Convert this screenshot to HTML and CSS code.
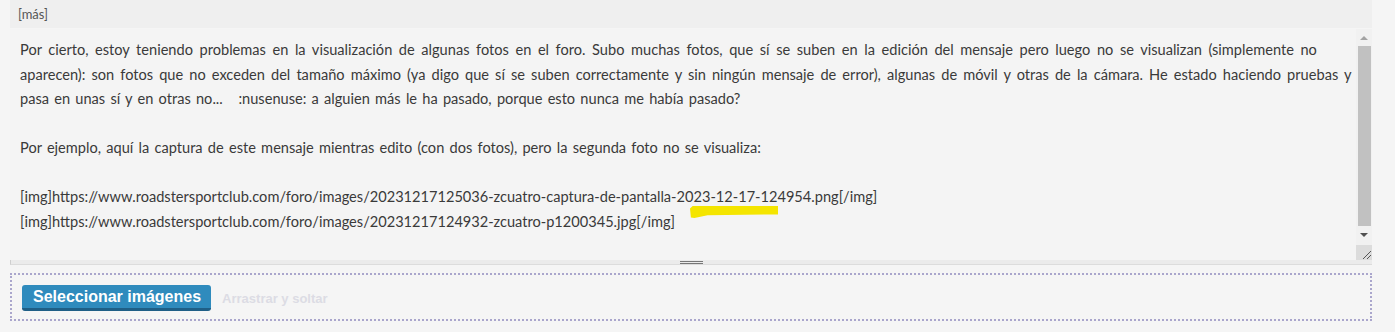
FILE: index.html
```html
<!DOCTYPE html>
<html lang="es">
<head>
    <meta charset="UTF-8">
    <meta name="viewport" content="width=device-width, initial-scale=1.0">
    <title>Editor</title>
    <link rel="stylesheet" href="styles.css">
</head>
<body>
    <div class="wrap">
        <div class="toolbar">[más]</div>

        <div class="editor">
            <div class="editor-text"><span class="spread-wide">Por cierto, estoy teniendo problemas en la visualización de algunas fotos en el foro. Subo muchas fotos, que sí se suben en la edición del mensaje pero luego no se visualizan (simplemente no</span>
<span class="spread">aparecen): son fotos que no exceden del tamaño máximo (ya digo que sí se suben correctamente y sin ningún mensaje de error), algunas de móvil y otras de la cámara. He estado haciendo pruebas y</span>
pasa en unas sí y en otras no...   :nusenuse: a alguien más le ha pasado, porque esto nunca me había pasado?

Por ejemplo, aquí la captura de este mensaje mientras edito (con dos fotos), pero la segunda foto no se visualiza:

[img]https://www.roadstersportclub.com/foro/images/20231217125036-zcuatro-captura-de-pantalla-2023-12-17-124954.png[/img]
[img]https://www.roadstersportclub.com/foro/images/20231217124932-zcuatro-p1200345.jpg[/img]</div>

            <div class="scrollbar">
                <div class="arrow arrow-up"></div>
                <div class="thumb"></div>
                <div class="arrow arrow-down"></div>
                <div class="corner">
                    <svg width="14" height="15" viewBox="0 0 14 15">
                        <path d="M5 14 L13 6 M9 14 L13 10" stroke="#555" stroke-width="1" fill="none"/>
                    </svg>
                </div>
            </div>

            <!-- marker stroke drawn over the text -->
            <div class="marker"></div>
        </div>

        <div class="resize-strip">
            <span class="grip"></span>
        </div>

        <div class="dropzone">
            <button type="button" class="select-btn">Seleccionar imágenes</button>
            <span class="drop-hint">Arrastrar y soltar</span>
        </div>
    </div>
</body>
</html>
```

FILE: styles.css
```css
body {
    margin: 0;
    padding: 0;
    background-color: #f5f5f5;
    font-family: Lato, "Open Sans", sans-serif;
    color: #3a3a3a;
}

.wrap {
    padding: 0 23px 0 10px;
}

.toolbar {
    height: 28px;
    line-height: 29px;
    padding-left: 8px;
    background-color: #efefef;
    font-size: 13px;
    color: #555;
    margin-bottom: 1px;
}

.editor {
    position: relative;
    display: flex;
    height: 231px;
    background-color: #f4f4f4;
}

.editor-text {
    flex: 1;
    padding: 9px 0 0 10px;
    font-size: 14.6px;
    line-height: 24.5px;
    word-spacing: 1.5px;
    white-space: pre;
    overflow: hidden;
}

.spread-wide {
    word-spacing: 2.85px;
}

.spread {
    word-spacing: 2.35px;
}

.scrollbar {
    width: 16px;
    display: flex;
    flex-direction: column;
    align-items: center;
    background-color: #f1f1f1;
}

.arrow {
    width: 14px;
    height: 17px;
    display: flex;
    align-items: center;
    justify-content: center;
}

.arrow::before {
    content: "";
    border-left: 4px solid transparent;
    border-right: 4px solid transparent;
}

.arrow-up::before {
    border-bottom: 4px solid #a3a3a3;
}

.arrow-down {
    height: 18px;
}

.arrow-down::before {
    border-top: 4px solid #505050;
}

.thumb {
    width: 13px;
    height: 180px;
    background-color: #c1c1c1;
}

.corner {
    width: 16px;
    height: 15px;
    margin-top: auto;
    background-color: #dcdcdc;
    display: flex;
    justify-content: flex-end;
}

.marker {
    position: absolute;
    left: 680px;
    top: 177px;
    width: 88px;
    height: 12px;
    background-color: #f4e500;
    clip-path: polygon(0 20%, 3% 0, 100% 0, 100% 70%, 20% 78%, 5% 100%, 1% 95%);
}

.resize-strip {
    height: 4px;
    background-color: #ebebeb;
    border-left: 1px solid #cfcfcf;
    border-bottom: 1px solid #dcdcdc;
    display: flex;
    justify-content: center;
    align-items: center;
}

.grip {
    width: 23px;
    height: 1px;
    border-top: 1px solid #777;
    border-bottom: 1px solid #777;
}

.dropzone {
    margin-top: 8px;
    border: 2px dotted #aaa6cc;
    padding: 10px 10px 8px 10px;
    display: flex;
    align-items: center;
}

.select-btn {
    height: 26px;
    padding: 0 10px 0 11px;
    font-family: "Liberation Sans", Arial, sans-serif;
    font-size: 16px;
    font-weight: bold;
    color: #fff;
    background-color: #2f8bbd;
    border: none;
    border-bottom: 3px solid #1f5f86;
    border-radius: 3px;
    cursor: pointer;
}

.drop-hint {
    margin-left: 11px;
    font-family: "Liberation Sans", Arial, sans-serif;
    font-size: 13px;
    font-weight: bold;
    color: #dcdce4;
}
```
